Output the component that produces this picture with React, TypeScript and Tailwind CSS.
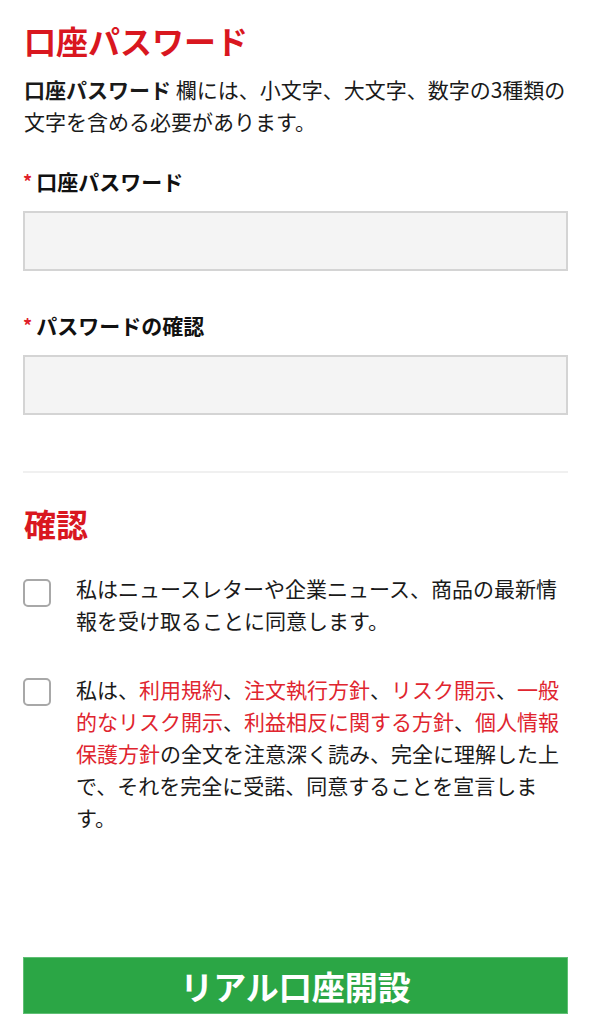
import React from "react";

const font = { fontFamily: '"Noto Sans CJK JP", "Noto Sans", sans-serif' };

function Field({ label }: { label: string }) {
  return (
    <div className="flex flex-col">
      <div className="flex items-center text-[21px] leading-[32px] font-bold text-[#111]">
        <span className="text-[#e0202a] mr-[4px] text-[18px]">*</span>
        <span>{label}</span>
      </div>
      <div className="mt-[14px] h-[60px] border-2 border-[#d4d4d4] bg-[#f4f4f4]" />
    </div>
  );
}

function Check({ children, boxOffset }: { children: React.ReactNode; boxOffset: string }) {
  return (
    <div className="flex items-start">
      <div className={`${boxOffset} w-[28px] h-[28px] shrink-0 rounded-[5px] border-2 border-[#a8a8a8] bg-white`} />
      <p className="ml-[25px] text-[21px] leading-[32px] text-[#1a1a1a]">{children}</p>
    </div>
  );
}

export default function App() {
  const R = "text-[#e0252f]";
  return (
    <div style={font} className="w-[591px] min-h-[1024px] bg-white px-[23px] pt-[20px] flex flex-col">
      <h1 className="text-[32px] leading-[40px] font-bold text-[#d9171f] pl-[1px]">口座パスワード</h1>
      <p className="mt-[13px] text-[21px] leading-[32px] text-[#1a1a1a] pl-[1px]">
        <span className="font-bold">口座パスワード</span> 欄には、小文字、大文字、数字の3種類の文字を含める必要があります。
      </p>
      <div className="mt-[28px]">
        <Field label="口座パスワード" />
      </div>
      <div className="mt-[38px]">
        <Field label="パスワードの確認" />
      </div>
      <div className="mt-[56px] h-[2px] bg-[#f0f0f0]" />
      <h2 className="mt-[30px] text-[32px] leading-[40px] font-bold text-[#d9171f] pl-[1px]">確認</h2>
      <div className="mt-[29px]">
        <Check boxOffset="mt-[7px]">私はニュースレターや企業ニュース、商品の最新情報を受け取ることに同意します。</Check>
      </div>
      <div className="mt-[37px]">
        <Check boxOffset="mt-[5px]">
          私は、<span className={R}>利用規約</span>、<span className={R}>注文執行方針</span>、<span className={R}>リスク開示</span>、<span className={R}>一般的なリスク開示</span>、<span className={R}>利益相反に関する方針</span>、<span className={R}>個人情報保護方針</span>の全文を注意深く読み、完全に理解した上で、それを完全に受諾、同意することを宣言します。
        </Check>
      </div>
      <button className="mt-[124px] h-[57px] w-full bg-[#2ba645] border border-[#5fbf74] text-white text-[33px] leading-[40px] font-bold flex items-center justify-center">
        リアル口座開設
      </button>
    </div>
  );
}
